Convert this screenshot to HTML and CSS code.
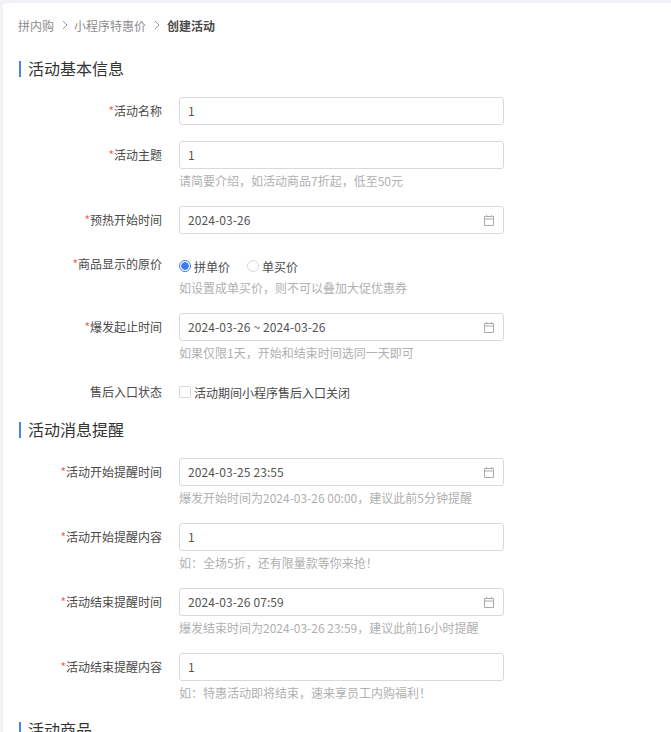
FILE: index.html
```html
<!DOCTYPE html>
<html lang="zh-CN">
  <head>
    <meta charset="UTF-8" />
    <title>创建活动</title>
    <link rel="stylesheet" href="styles.css">
  </head>
  <body>
    <div class="card">
      <div class="breadcrumb">
        <span>拼内购</span>
        <svg class="crumb-sep" viewBox="0 0 6 10"><path d="M1 1l4 4-4 4" /></svg>
        <span>小程序特惠价</span>
        <svg class="crumb-sep" viewBox="0 0 6 10"><path d="M1 1l4 4-4 4" /></svg>
        <span class="crumb-current">创建活动</span>
      </div>

      <h2 class="section-title">活动基本信息</h2>

      <div class="form-row">
        <label class="form-label"><i>*</i>活动名称</label>
        <div class="form-control"><div class="input">1</div></div>
      </div>
      <div class="form-row">
        <label class="form-label"><i>*</i>活动主题</label>
        <div class="form-control">
          <div class="input">1</div>
          <div class="hint">请简要介绍，如活动商品7折起，低至50元</div>
        </div>
      </div>
      <div class="form-row">
        <label class="form-label"><i>*</i>预热开始时间</label>
        <div class="form-control">
          <div class="input">2024-03-26
            <svg class="cal" viewBox="0 0 12 12"><path d="M1.5 2.5h9v9h-9zM1.5 5h9M3.5 1v1.5M8.5 1v1.5" /></svg>
          </div>
        </div>
      </div>
      <div class="form-row">
        <label class="form-label"><i>*</i>商品显示的原价</label>
        <div class="form-control">
          <div class="choices radio-group">
            <span class="choice"><b class="radio checked"></b>拼单价</span>
            <span class="choice"><b class="radio"></b>单买价</span>
          </div>
          <div class="hint">如设置成单买价，则不可以叠加大促优惠券</div>
        </div>
      </div>
      <div class="form-row">
        <label class="form-label"><i>*</i>爆发起止时间</label>
        <div class="form-control">
          <div class="input">2024-03-26 ~ 2024-03-26
            <svg class="cal" viewBox="0 0 12 12"><path d="M1.5 2.5h9v9h-9zM1.5 5h9M3.5 1v1.5M8.5 1v1.5" /></svg>
          </div>
          <div class="hint">如果仅限1天，开始和结束时间选同一天即可</div>
        </div>
      </div>
      <div class="form-row">
        <label class="form-label">售后入口状态</label>
        <div class="form-control">
          <div class="choices"><span class="choice"><b class="checkbox"></b>活动期间小程序售后入口关闭</span></div>
        </div>
      </div>

      <h2 class="section-title">活动消息提醒</h2>

      <div class="form-row">
        <label class="form-label"><i>*</i>活动开始提醒时间</label>
        <div class="form-control">
          <div class="input">2024-03-25 23:55
            <svg class="cal" viewBox="0 0 12 12"><path d="M1.5 2.5h9v9h-9zM1.5 5h9M3.5 1v1.5M8.5 1v1.5" /></svg>
          </div>
          <div class="hint">爆发开始时间为2024-03-26 00:00，建议此前5分钟提醒</div>
        </div>
      </div>
      <div class="form-row">
        <label class="form-label"><i>*</i>活动开始提醒内容</label>
        <div class="form-control">
          <div class="input">1</div>
          <div class="hint">如：全场5折，还有限量款等你来抢！</div>
        </div>
      </div>
      <div class="form-row">
        <label class="form-label"><i>*</i>活动结束提醒时间</label>
        <div class="form-control">
          <div class="input">2024-03-26 07:59
            <svg class="cal" viewBox="0 0 12 12"><path d="M1.5 2.5h9v9h-9zM1.5 5h9M3.5 1v1.5M8.5 1v1.5" /></svg>
          </div>
          <div class="hint">爆发结束时间为2024-03-26 23:59，建议此前16小时提醒</div>
        </div>
      </div>
      <div class="form-row">
        <label class="form-label"><i>*</i>活动结束提醒内容</label>
        <div class="form-control">
          <div class="input">1</div>
          <div class="hint">如：特惠活动即将结束，速来享员工内购福利！</div>
        </div>
      </div>

      <h2 class="section-title last">活动商品</h2>
    </div>
  </body>
</html>
```

FILE: styles.css
```css
html {
  overflow: hidden;
}
body {
  margin: 0;
  height: 732px;
  overflow: hidden;
  padding: 3px 0 0 3px;
  box-sizing: border-box;
  background-color: #f0f2f5;
  font-family: "Noto Sans CJK SC", "Noto Sans", sans-serif;
  font-size: 12px;
  color: #4a4a4a;
}
.card {
  background-color: #fff;
  border-radius: 4px 0 0 0;
  padding: 14px 0 0 15px;
  height: 800px;
}
.breadcrumb {
  display: flex;
  align-items: center;
  height: 16px;
  color: #8c8c8c;
}
.crumb-sep {
  width: 6px;
  height: 10px;
  margin: 0 6px 0 8px;
  fill: none;
  stroke: #999;
}
.crumb-current {
  margin-left: 1px;
  color: #4a4a4a;
  font-weight: 700;
}
.section-title {
  margin: 28px 0 20px 1px;
  padding-left: 7px;
  border-left: 2px solid #4a7ff7;
  height: 16px;
  line-height: 14px;
  font-size: 16px;
  font-weight: 400;
  color: #333;
}
.form-row {
  display: flex;
  margin-bottom: 16px;
}
.form-row + .section-title {
  margin-top: 16px;
}
.form-row + .section-title.last {
  margin-top: 20px;
}
.form-label {
  width: 144px;
  flex: none;
  text-align: right;
  line-height: 28px;
  height: 28px;
  color: #4a4a4a;
}
.form-label i {
  color: #f5625d;
  font-style: normal;
}
.form-control {
  margin-left: 17px;
  width: 325px;
}
.input {
  position: relative;
  box-sizing: border-box;
  height: 28px;
  border: 1px solid #d9d9d9;
  border-radius: 3px;
  padding-left: 8px;
  line-height: 26px;
  color: #555;
  letter-spacing: 0.1px;
}
.cal {
  position: absolute;
  right: 8px;
  top: 7px;
  width: 12px;
  height: 12px;
  fill: none;
  stroke: #aaa;
}
.hint {
  height: 21px;
  line-height: 24px;
  color: #b0b0b0;
}
.choices {
  display: flex;
  gap: 17px;
  height: 28px;
  align-items: center;
}
.radio-group {
  height: 20px;
  padding-top: 6px;
}
.choice {
  display: flex;
  align-items: center;
  gap: 3px;
}
.radio {
  box-sizing: border-box;
  width: 12px;
  height: 12px;
  border: 1px solid #d9d9d9;
  border-radius: 50%;
  background: #fff;
}
.radio.checked {
  border-color: #3d7bf5;
  background: radial-gradient(circle, #3d7bf5 0 3.5px, #fff 4px);
}
.checkbox {
  box-sizing: border-box;
  width: 12px;
  height: 12px;
  border: 1px solid #d9d9d9;
  border-radius: 2px;
}
```
